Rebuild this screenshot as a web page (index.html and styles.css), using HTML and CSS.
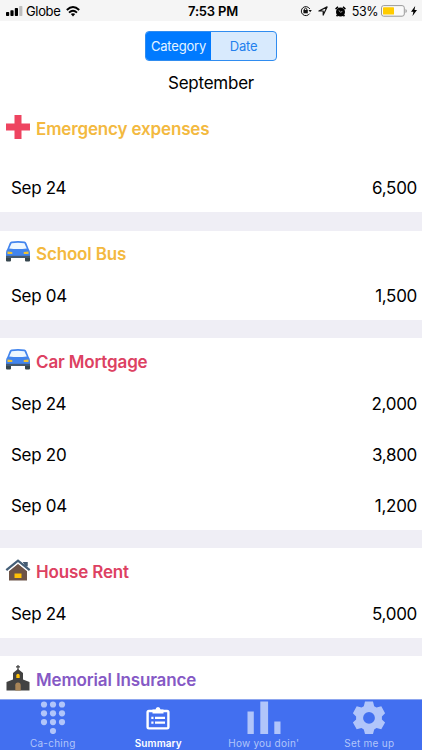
FILE: index.html
```html
<!DOCTYPE html>
<html lang="en">
<head>
<meta charset="utf-8">
<meta name="viewport" content="width=device-width, initial-scale=1">
<title>Summary</title>
<link rel="stylesheet" href="styles.css">
</head>
<body>
<svg width="0" height="0" class="defs" aria-hidden="true">
  <symbol id="car" viewBox="0 0 26 22">
    <path d="M1 15h5v4.500q0 1-1 1H2q-1 0-1-1zM20 15h5v4.500q0 1-1 1h-3q-1 0-1-1z" fill="#37474f"/>
    <path d="M6.500.5Q13-.5 19.500.5q1.200.2 1.800 1.400L23.700 8q1.300 1.500 1.300 4v4H1v-4q0-2.500 1.300-4L4.700 1.900Q5.300.7 6.500.5z" fill="#4285ee"/>
    <path d="M6.600 2.200Q13 1.300 19.400 2.200L21.800 7.600Q13 8.600 4.200 7.600z" fill="#eef8ff"/>
    <path d="M1 14.800h24v2.200H1z" fill="#455a70"/>
    <path d="M2.500 10.500l4.800.5v2H2.500zM23.500 10.500l-4.800.5v2h4.800z" fill="#efc234"/>
  </symbol>
</svg>
<div class="app">
  <header class="status">
    <div class="carrier">
      <svg width="17" height="10" viewBox="0 0 17 10"><rect y="6" width="3.200" height="4" rx=".7"/><rect x="4.400" y="4.200" width="3.200" height="5.800" rx=".7"/><rect x="8.800" y="2" width="3.200" height="8" rx=".7"/><rect x="13.200" width="3.200" height="10" rx=".7" fill="#bdbdbd"/></svg>
      <span>Globe</span>
      <svg class="wifi" width="14" height="11" viewBox="0 0 14 11" fill="none" stroke="#000" stroke-width="1.900"><path d="M.8 4Q7-1.800 13.200 4M3 6.600Q7 3 11 6.600"/><path d="M4.800 8.100Q7 6.400 9.200 8.100L7 10.400z" fill="#000" stroke="none"/></svg>
    </div>
    <div class="clock">7:53 PM</div>
    <div class="indicators">
      <svg width="12" height="12" viewBox="0 0 12 12" fill="none" stroke="#111"><path d="M9.600 8.600A4.500 4.500 0 1 1 9.800 4"/><path d="M8.500 5h3.300L10.200 7.200z" fill="#111" stroke="none"/><path d="M3.400 5h4.400v3.300H3.400z" fill="#111" stroke="none"/><path d="M4.300 5.200V4q1.300-1.600 2.600 0v1.200"/></svg>
      <svg class="arrow" width="10" height="10" viewBox="0 0 10 10" fill="none" stroke="#111" stroke-width="1.200" stroke-linejoin="round"><path d="M.9 5L9.100.9 5.200 9.100V5z"/></svg>
      <svg class="alarm" width="11" height="11" viewBox="0 0 11 11"><circle cx="5.500" cy="6" r="4.500"/><path d="M.6 3.100L3 .7M10.400 3.100L8 .7M2.500 9L1.600 10.300M8.500 9l.9 1.300" stroke="#000" stroke-width="1.500"/><path d="M3.700 4.400l1.900 1.800 1.700-.7" fill="none" stroke="#f5f5f5" stroke-width=".7"/></svg>
      <span class="percent">53%</span>
      <svg width="26" height="12" viewBox="0 0 26 12"><rect x=".5" y=".6" width="22.800" height="10.600" rx="2.200" fill="#fafafa" stroke="#999"/><rect x="2" y="2.200" width="11" height="7.400" rx=".7" fill="#fc0"/><path d="M24.500 4q1.300.4 1.300 2t-1.300 2z" fill="#999"/></svg>
      <svg class="bolt" width="6" height="10" viewBox="0 0 6 10"><path d="M4.200 0L0 5.700h2.400L1.500 10 6 4.100H3.500z"/></svg>
    </div>
  </header>
  <main>
    <div class="segments"><button class="segment selected">Category</button><button class="segment">Date</button></div>
    <h1>September</h1>
    <section class="group first yellow">
      <h2><svg class="icon" viewBox="0 0 26 26"><path d="M9.500 1h7v8.500H25v7h-8.500V25h-7v-8.500H1v-7h8.500z" fill="#ee4460"/></svg><span>Emergency expenses</span></h2>
      <div class="row"><span>Sep 24</span><span class="amount">6,500</span></div>
    </section>
    <section class="group yellow">
      <h2><svg class="icon car"><use href="#car"/></svg><span>School Bus</span></h2>
      <div class="row"><span>Sep 04</span><span class="amount">1,500</span></div>
    </section>
    <section class="group red">
      <h2><svg class="icon car"><use href="#car"/></svg><span>Car Mortgage</span></h2>
      <div class="row"><span>Sep 24</span><span class="amount">2,000</span></div>
      <div class="row"><span>Sep 20</span><span class="amount">3,800</span></div>
      <div class="row"><span>Sep 04</span><span class="amount">1,200</span></div>
    </section>
    <section class="group red">
      <h2><svg class="icon house" viewBox="0 0 26 22"><path d="M4 11.500L13 4.500l9 7v10H4z" fill="#6d5448"/><path d="M18 3h4.500v7L18 6z" fill="#455a70"/><path d="M1.300 11.600L13 2l11.700 9.600" fill="none" stroke="#fff" stroke-width="4.400"/><path d="M18 3h4.500v4.500L20 7z" fill="#455a70"/><path d="M1.300 11.200L13 1.700l11.700 9.500" fill="none" stroke="#455f78" stroke-width="2.300"/><path d="M9.500 14.500h7v4.500h-7z" fill="#ffc107"/></svg><span>House Rent</span></h2>
      <div class="row"><span>Sep 24</span><span class="amount">5,000</span></div>
    </section>
    <section class="group purple">
      <h2><svg class="icon church" viewBox="0 0 24 26"><path d="M12 0v6M10 1.800h4" stroke="#424242" stroke-width="1.200"/><path d="M12 4l5 4v6.500l6.500 2.500v8.500H.5V17L7 14.500V8z" fill="#424242"/><path d="M10.300 13v-2.500q0-1.700 1.700-1.700t1.700 1.700V13z" fill="#ffc107"/><path d="M9.300 25.500V20.200q0-2.700 2.700-2.700t2.700 2.700v5.300z" fill="#a98558"/></svg><span>Memorial Insurance</span></h2>
    </section>
  </main>
  <nav class="tabs">
    <a class="tab"><svg width="26" height="34" viewBox="0 0 26 34"><g fill="currentColor"><circle cx="4" cy="4.500" r="3.100"/><circle cx="13" cy="4.500" r="3.100"/><circle cx="22" cy="4.500" r="3.100"/><circle cx="4" cy="13.300" r="3.100"/><circle cx="13" cy="13.300" r="3.100"/><circle cx="22" cy="13.300" r="3.100"/><circle cx="4" cy="22.100" r="3.100"/><circle cx="13" cy="22.100" r="3.100"/><circle cx="22" cy="22.100" r="3.100"/><circle cx="13" cy="31" r="3.100"/></g></svg><span>Ca-ching</span></a>
    <a class="tab active"><svg width="24" height="34" viewBox="0 0 24 34"><rect x="1.600" y="11" width="20.800" height="17.400" rx="1.300" fill="none" stroke="currentColor" stroke-width="2.400"/><path d="M6.500 13.500v-4h3q.3-2.500 2.500-2.500t2.500 2.500h3v4z" fill="currentColor"/><path d="M5.300 17.800h2.200M9 17.800h10M5.300 22.600h2.200M9 22.600h10" stroke="currentColor" stroke-width="2.300"/></svg><span>Summary</span></a>
    <a class="tab"><svg width="34" height="34" viewBox="0 0 34 34"><path d="M.5 11.500h6.300V34H.5zM13.300 1.500h7.800V34h-7.800zM27.300 21.500h6.200V34h-6.200z" fill="currentColor"/></svg><span>How you doin'</span></a>
    <a class="tab"><svg width="34" height="34" viewBox="0 0 34 34"><path fill-rule="evenodd" d="M13 1.500h8l1.200 4.700 2.300 1.300 4.800-1.200 3.800 6.900-3.200 3.200v3l3.200 3.200-3.800 6.700-4.800-1.200-2.300 1.300L21 34h-8l-1.200-4.600-2.300-1.300-4.800 1.200-3.800-6.700 3.200-3.200v-3L.9 13.200l3.800-6.900 4.800 1.200 2.300-1.300zM17 12a5.900 5.900 0 1 0 0 11.800A5.900 5.900 0 0 0 17 12z" fill="currentColor"/></svg><span>Set me up</span></a>
  </nav>
</div>
</body>
</html>
```

FILE: styles.css
```css
* { box-sizing: border-box; }
body { margin: 0; background: #fff; color: #000; font-family: Inter, sans-serif; }
.defs { display: block; }
.app { width: 422px; height: 750px; display: flex; flex-direction: column; overflow: hidden; }
.status { flex: none; height: 21px; padding: 0 5px 0 6px; background: #f5f5f5; display: grid; grid-template-columns: 1fr auto 1fr; align-items: center; font-size: 13px; line-height: 21px; }
.carrier, .indicators { display: flex; align-items: center; }
.carrier span { margin: 1px 0 0 3px; letter-spacing: -.35px; }
.wifi { margin-left: 6px; }
.clock { padding: 1px 0 0 3px; font-weight: 600; letter-spacing: -.2px; }
.indicators { justify-content: flex-end; }
.arrow { margin-left: 6px; }
.alarm { margin-left: 7px; }
.percent { margin: 1px 3px 0 6px; font-size: 12.5px; letter-spacing: -.45px; }
.bolt { margin-left: 4px; }
main { flex: 1; min-height: 0; overflow: hidden; }
.segments { display: flex; width: 132px; height: 30px; margin: 9.500px 0 0 145px; border: 1px solid #2f8cf0; border-radius: 4px; overflow: hidden; background: #d8eafd; }
.segment { flex: 1; border: 0; padding: 0; background: none; color: #2380ed; font: 13px Inter, sans-serif; letter-spacing: -.2px; }
.selected { background: #007aff; color: #e4f4ff; }
h1 { margin: 9px 0 0; font-size: 17px; line-height: 27px; font-weight: 400; text-align: center; letter-spacing: -.25px; }
.group::after { content: ""; display: block; height: 18.400px; background: #efeef5; }
.group h2 { display: flex; align-items: center; height: 38.500px; margin: 0; padding: 9.500px 0 0 5px; font-size: 17px; line-height: 25px; font-weight: 600; letter-spacing: -.15px; }
.group.first h2 { height: 64.700px; padding: 0 0 0 5px; }
.first h2 span { padding-top: 1px; }
.yellow h2 { color: #f3b940; }
.red h2 { color: #dd4162; }
.purple h2 { color: #8559c5; }
.purple::after { display: none; }
.icon { width: 26px; height: 26px; margin: 0 5px 4px 0; flex: none; }
.car, .house { height: 22px; margin-bottom: 5px; }
.church { width: 24px; margin: 0 6px 5px 1px; }
.row { height: 51px; padding: 2.500px 5px 0 11px; display: flex; justify-content: space-between; align-items: center; font-size: 17px; line-height: 24px; letter-spacing: -.3px; }
.tabs { flex: none; height: 51px; background: #426ff0; border-top: 1px solid #8da6ef; display: grid; grid-template-columns: repeat(4, 1fr); }
.tab { display: flex; flex-direction: column; align-items: center; color: #b1c5fa; font-size: 10px; line-height: 16px; letter-spacing: .25px; }
.tab span { margin-top: 1px; }
.active { color: #fff; font-weight: 600; letter-spacing: .1px; }
```
